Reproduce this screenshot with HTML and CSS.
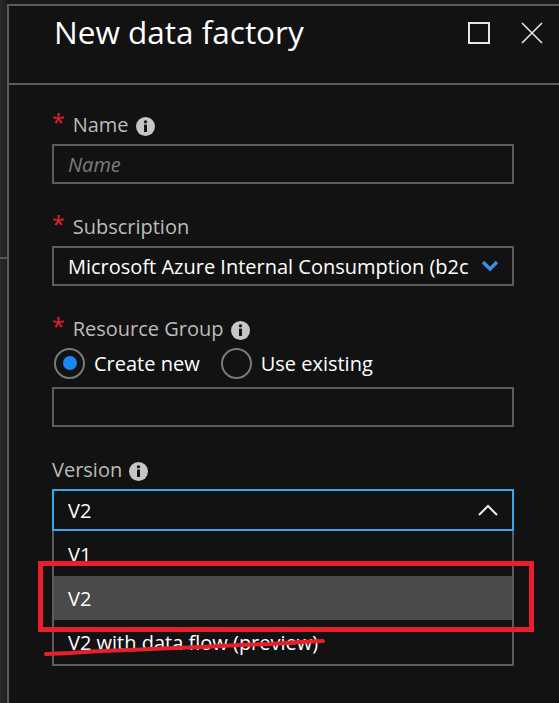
FILE: index.html
```html
<!DOCTYPE html>
<html>
<head>
<meta charset="utf-8">
<link rel="stylesheet" href="styles.css">
</head>
<body>
<div class="shell">
  <div class="strip"></div>
  <div class="panel">
    <div class="header">
      <h1 class="title">New data factory</h1>
      <div class="actions">
        <svg class="act" width="22" height="22" viewBox="0 0 22 22"><rect x="1" y="1" width="20" height="20" fill="none" stroke="#e6e6e6" stroke-width="2"/></svg>
        <svg class="act" width="22" height="22" viewBox="0 0 22 22"><path d="M1 1 L21 21 M21 1 L1 21" stroke="#e6e6e6" stroke-width="1.6" fill="none"/></svg>
      </div>
    </div>
    <div class="form">
      <div class="field">
        <div class="label"><span class="req">*</span>Name<svg class="info" width="19" height="19" viewBox="0 0 18 18"><circle cx="9" cy="9" r="9" fill="#c6c6c6"/><circle cx="9" cy="4.6" r="1.6" fill="#121212"/><rect x="7.6" y="7.2" width="2.8" height="7" fill="#121212"/></svg></div>
        <div class="box"><span class="placeholder">Name</span></div>
      </div>
      <div class="field">
        <div class="label"><span class="req">*</span>Subscription</div>
        <div class="box select"><span class="value">Microsoft Azure Internal Consumption (b2c</span>
          <svg class="chev" width="18" height="12" viewBox="0 0 18 12"><path d="M2 2 L9 9 L16 2" stroke="#3a8ee6" stroke-width="3.4" fill="none"/></svg>
        </div>
      </div>
      <div class="field">
        <div class="label"><span class="req">*</span>Resource Group<svg class="info" width="19" height="19" viewBox="0 0 18 18"><circle cx="9" cy="9" r="9" fill="#c6c6c6"/><circle cx="9" cy="4.6" r="1.6" fill="#121212"/><rect x="7.6" y="7.2" width="2.8" height="7" fill="#121212"/></svg></div>
        <div class="radios">
          <label class="radio"><span class="dot on"></span>Create new</label>
          <label class="radio"><span class="dot"></span>Use existing</label>
        </div>
        <div class="box"></div>
      </div>
      <div class="field">
        <div class="label plain">Version<svg class="info" width="19" height="19" viewBox="0 0 18 18"><circle cx="9" cy="9" r="9" fill="#c6c6c6"/><circle cx="9" cy="4.6" r="1.6" fill="#121212"/><rect x="7.6" y="7.2" width="2.8" height="7" fill="#121212"/></svg></div>
        <div class="box select open"><span class="value">V2</span>
          <svg class="chevup" width="20" height="12" viewBox="0 0 20 12"><path d="M1 11 L10 2 L19 11" stroke="#f0f0f0" stroke-width="2" fill="none"/></svg>
        </div>
        <div class="list">
          <div class="item">V1</div>
          <div class="item sel">V2</div>
          <div class="item">V2 with data flow (preview)</div>
        </div>
      </div>
    </div>
  </div>
</div>
<div class="mark"></div>
<svg class="scribble" width="559" height="703" viewBox="0 0 559 703"><path d="M46 654 L70 653 L100 651 L130 650 L150 649 L175 648 L200 647 L220 646 L240 645 L270 644 L300 642 L323 641" stroke="#e8202a" stroke-width="4" fill="none" stroke-linecap="round"/></svg>
</body>
</html>
```
FILE: styles.css
```css
html, body {
  margin: 0;
  padding: 0;
  background: #191919;
  width: 559px;
  height: 703px;
  overflow: hidden;
  font-family: "Open Sans", "Noto Sans", sans-serif;
}
.shell {
  display: flex;
  padding-top: 4px;
  height: 699px;
}
.strip {
  width: 7px;
  margin-top: -4px;
  background:
    linear-gradient(to bottom, transparent 257px, #555 257px, #555 259px, transparent 259px),
    linear-gradient(to right, #2c2b29, #1f1f1e);
}
.panel {
  flex: 1;
  background: #121212;
  border-top: 2px solid #5c5c5c;
  border-left: 2px solid #5c5c5c;
  display: flex;
  flex-direction: column;
}
.header {
  height: 77px;
  border-bottom: 2px solid #5c5c5c;
  display: flex;
  align-items: flex-start;
  padding-left: 45px;
  padding-right: 16px;
}
.title {
  margin: 0;
  margin-top: 4px;
  color: #fff;
  font-weight: 400;
  font-size: 31.5px;
  line-height: 44px;
  flex: 1;
}
.actions {
  display: flex;
  gap: 31px;
  margin-top: 16px;
}
.act { display: block; }
.form {
  padding: 25px 0 0 43px;
  width: 462px;
}
.field { margin-bottom: 28px; }
.label {
  color: #bcbcbc;
  font-size: 20px;
  line-height: 30px;
  height: 30px;
  margin-bottom: 4px;
  display: flex;
  align-items: center;
}
.req {
  color: #e8202a;
  font-size: 23px;
  margin-right: 8px;
  position: relative;
  top: -3px;
}
.info { margin-left: 7px; margin-top: 3px; }
.box {
  height: 36px;
  border: 2px solid #5c5c5c;
  display: flex;
  align-items: center;
  padding: 0 14px;
  color: #fff;
  font-size: 20px;
}
.placeholder {
  color: #7c7c7c;
  font-style: italic;
}
.select { justify-content: space-between; }
.value { white-space: nowrap; overflow: hidden; }
.chev { margin-right: -1px; }
.open {
  border-color: #35a8f0;
  height: 38px;
}
.radios {
  display: flex;
  gap: 19px;
  margin-top: -1px;
  margin-bottom: 8px;
}
.radio {
  display: flex;
  align-items: center;
  color: #fff;
  font-size: 20px;
  height: 32px;
  gap: 9px;
}
.dot {
  width: 27px;
  height: 27px;
  margin-left: 2px;
  border: 2px solid #7a7a7a;
  border-radius: 50%;
  display: flex;
  align-items: center;
  justify-content: center;
}
.dot.on::after {
  content: "";
  width: 14px;
  height: 14px;
  border-radius: 50%;
  background: #1689f5;
}
.list {
  border: 2px solid #5c5c5c;
  border-top: 0;
  padding-top: 1px;
}
.item {
  height: 44px;
  display: flex;
  align-items: center;
  padding-left: 14px;
  color: #fff;
  font-size: 20px;
}
.item.sel { background: #4a4a4a; }
.mark {
  position: absolute;
  left: 38px;
  top: 561px;
  width: 486px;
  height: 61px;
  border: 5px solid #e8202a;
}
.scribble {
  position: absolute;
  left: 0;
  top: 0;
  pointer-events: none;
}
```
